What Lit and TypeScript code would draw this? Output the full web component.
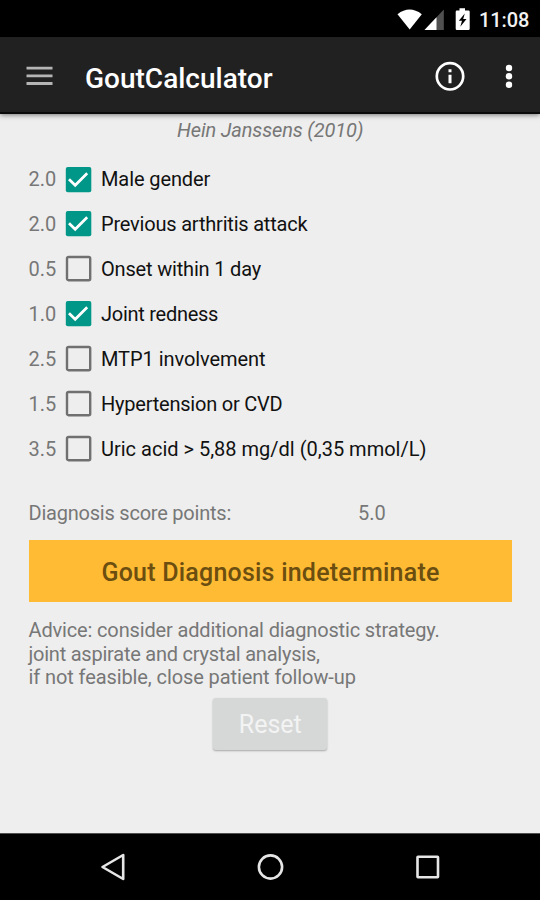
import { LitElement, html, css, svg } from "lit";
import { customElement, state } from "lit/decorators.js";
import { styleMap } from "lit/directives/style-map.js";

interface Criterion {
  points: number;
  label: string;
  tracking: number;
  checked: boolean;
}

@customElement("status-bar")
class StatusBar extends LitElement {
  static styles = css`
    :host {
      display: flex;
      justify-content: flex-end;
      height: 37px;
      background: #000;
      color: #f2f2f2;
    }
    .icons { display: block; width: 80px; height: 37px; }
    .time {
      width: 69px;
      box-sizing: border-box;
      padding-left: 8px;
      font: 500 20px/41px Roboto, sans-serif;
      letter-spacing: -0.1px;
      white-space: nowrap;
    }
  `;
  render() {
    return html`
      <svg class="icons" viewBox="391 0 80 37">
        <path fill="#fff" d="M397.5 14.2Q409.500 5 421.800 14.200L409.700 29.500Z" />
        <path fill="#505050" d="M424.500 30L443.800 9.500V30Z" />
        <path fill="#fff" d="M424.500 30L436.500 17.300V30Z" />
        <path fill="#fff" d="M459.500 8.300h5.500v2.200h3.500q1.200 0 1.200 1.200v17q0 1.200-1.200 1.200h-11.600q-1.200 0-1.200-1.200v-17q0-1.200 1.200-1.200h2.600z" />
        <path fill="#000" d="M464.800 13.500L458.800 20.800h3.200l-1.700 6 6.200-7.800h-3.300z" />
      </svg>
      <span class="time">11:08</span>
    `;
  }
}

@customElement("app-bar")
class AppBar extends LitElement {
  static styles = css`
    :host {
      display: flex;
      align-items: center;
      height: 77px;
      box-sizing: border-box;
      background: #212121;
      border-bottom: 2px solid #0a0a0a;
      color: #fff;
      position: relative;
      box-shadow: 0 1px 5px rgba(0, 0, 0, 0.5);
    }
    .menu { display: block; width: 27px; height: 20px; margin-left: 26px; margin-top: 3px; }
    .title {
      margin: 8px 0 0 32px;
      flex: 1;
      font: 500 28px/36px Roboto, sans-serif;
    }
    .actions { display: block; width: 110px; height: 40px; margin-top: 3px; }
  `;
  render() {
    return html`
      <svg class="menu" viewBox="0 0 27 20">
        <path d="M0.500 2.200h26M0.500 9.900h26M0.500 17.500h26" stroke="#b5b5b5" stroke-width="2.800" />
      </svg>
      <span class="title">GoutCalculator</span>
      <svg class="actions" viewBox="430 56 110 40">
        <circle cx="450" cy="76.300" r="13.200" fill="none" stroke="#fff" stroke-width="2.700" />
        <path d="M448.500 69.300h3v3h-3zM448.500 74.800h3v8.400h-3z" fill="#fff" />
        <circle cx="509" cy="68" r="3.200" fill="#fff" />
        <circle cx="509" cy="76.300" r="3.200" fill="#fff" />
        <circle cx="509" cy="84.700" r="3.200" fill="#fff" />
      </svg>
    `;
  }
}

@customElement("nav-bar")
class NavBar extends LitElement {
  static styles = css`
    :host { display: block; height: 67px; background: #000; box-shadow: inset 0 1px 0 #505050; }
    .keys { display: block; width: 540px; height: 67px; }
  `;
  render() {
    return html`
      <svg class="keys" viewBox="0 833 540 67" fill="none" stroke="#e6e6e6" stroke-width="2.600" stroke-linejoin="round">
        <path d="M102.500 867L123.200 855V879Z" />
        <circle cx="270.500" cy="867" r="11.600" />
        <rect x="417.500" y="856.800" width="20.500" height="20.500" rx="0.500" />
      </svg>
    `;
  }
}

@customElement("app-root")
class AppRoot extends LitElement {
  static styles = css`
    :host {
      display: flex;
      flex-direction: column;
      width: 540px;
      height: 900px;
      overflow: hidden;
      background: #eee;
      color: #777;
      font: 20px/23.300px Roboto, sans-serif;
    }
    .content { flex: 1; padding: 0 28px 0 28.500px; display: flex; flex-direction: column; }
    .source { margin-top: 5px; text-align: center; font-style: italic; letter-spacing: -0.15px; }
    .criteria { margin-top: 14.300px; }
    .row { display: flex; align-items: center; height: 44.900px; cursor: pointer; }
    .points { width: 36.500px; padding-top: 2px; }
    .box { display: block; width: 27px; height: 27px; margin-right: 9px; }
    .label { padding-top: 2px; color: #111; white-space: nowrap; }
    .score { display: flex; margin-top: 31.400px; height: 24px; }
    .score-label { width: 329.500px; letter-spacing: -0.220px; }
    .result {
      margin: 14px 0 0 0.500px;
      height: 62px;
      width: 483px;
      background: #ffbb33;
      color: #6b4e10;
      text-align: center;
      font: 500 25px/66px Roboto, sans-serif;
      letter-spacing: 0.220px;
    }
    .advice { margin-top: 17px; }
    .line { white-space: nowrap; }
    .reset {
      align-self: center;
      margin-top: 8.500px;
      width: 114px;
      height: 52px;
      padding: 2px 0 0;
      border: 0;
      border-radius: 3px;
      background: #d6d8d7;
      box-shadow: 0 1px 2px rgba(0, 0, 0, 0.3);
      color: #f3f3f3;
      font: 25px/50px Roboto, sans-serif;
    }
  `;

  @state() criteria: Criterion[] = [
    { points: 2, label: "Male gender", tracking: -0.1, checked: true },
    { points: 2, label: "Previous arthritis attack", tracking: -0.2, checked: true },
    { points: 0.5, label: "Onset within 1 day", tracking: -0.18, checked: false },
    { points: 1, label: "Joint redness", tracking: -0.27, checked: true },
    { points: 2.5, label: "MTP1 involvement", tracking: -0.06, checked: false },
    { points: 1.5, label: "Hypertension or CVD", tracking: -0.22, checked: false },
    { points: 3.5, label: "Uric acid > 5,88 mg/dl (0,35 mmol/L)", tracking: 0, checked: false },
  ];

  private advice = [
    { text: "Advice: consider additional diagnostic strategy.", tracking: -0.15 },
    { text: "joint aspirate and crystal analysis,", tracking: -0.23 },
    { text: "if not feasible, close patient follow-up", tracking: -0.1 },
  ];

  private toggle(index: number) {
    this.criteria = this.criteria.map((c, i) => (i === index ? { ...c, checked: !c.checked } : c));
  }

  private reset() {
    this.criteria = this.criteria.map((c) => ({ ...c, checked: false }));
  }

  private checkbox(checked: boolean) {
    return html`<svg class="box" viewBox="0 0 27 27">
      ${checked
        ? svg`<rect x="0.800" y="1" width="25.500" height="25.200" rx="2" fill="#009688" />
            <path d="M4 13.200L10.200 19.300L22.200 7.300" fill="none" stroke="#fff" stroke-width="2.700" />`
        : svg`<rect x="2" y="2" width="23.200" height="23.200" rx="1.500" fill="none" stroke="#707070" stroke-width="2.400" />`}
    </svg>`;
  }

  render() {
    const score = this.criteria.reduce((sum, c) => sum + (c.checked ? c.points : 0), 0);
    return html`
      <status-bar></status-bar>
      <app-bar></app-bar>
      <main class="content">
        <div class="source">Hein Janssens (2010)</div>
        <div class="criteria">
          ${this.criteria.map(
            (c, i) => html`<div class="row" @click=${() => this.toggle(i)}>
              <span class="points">${c.points.toFixed(1)}</span>
              ${this.checkbox(c.checked)}
              <span class="label" style=${styleMap({ letterSpacing: `${c.tracking}px` })}>${c.label}</span>
            </div>`
          )}
        </div>
        <div class="score">
          <span class="score-label">Diagnosis score points:</span>
          <span>${score.toFixed(1)}</span>
        </div>
        <div class="result">Gout Diagnosis indeterminate</div>
        <div class="advice">
          ${this.advice.map(
            (l) => html`<div class="line" style=${styleMap({ letterSpacing: `${l.tracking}px` })}>${l.text}</div>`
          )}
        </div>
        <button class="reset" @click=${this.reset}>Reset</button>
      </main>
      <nav-bar></nav-bar>
    `;
  }
}
